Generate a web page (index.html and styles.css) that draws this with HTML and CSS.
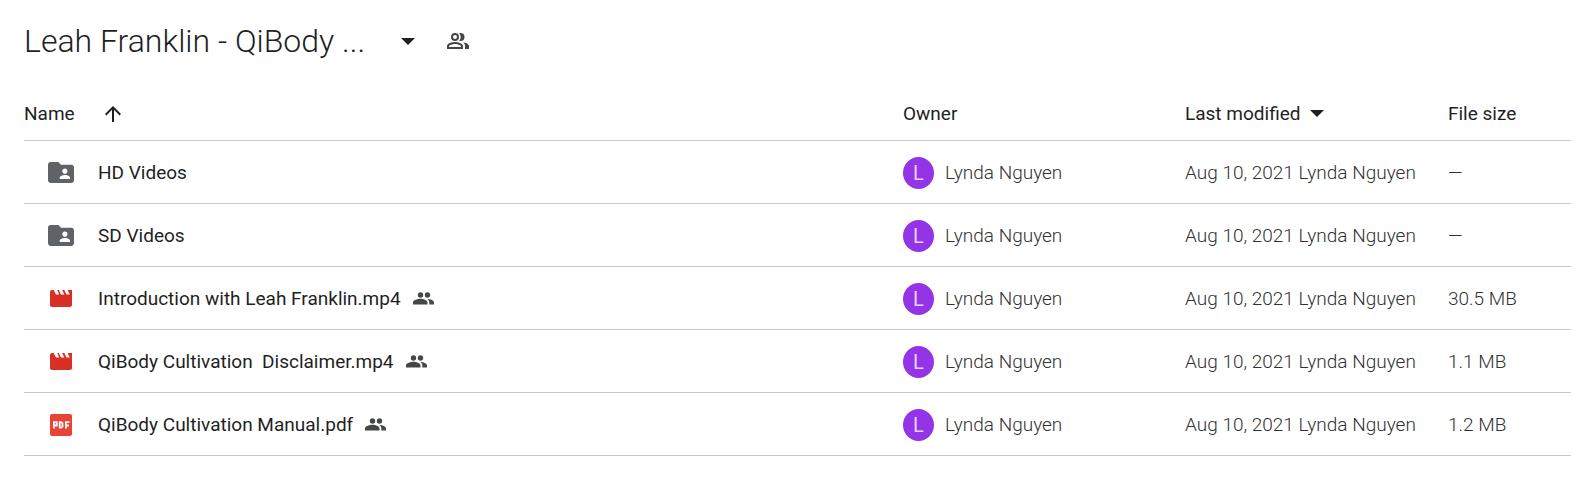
FILE: index.html
```html
<!DOCTYPE html>
<html lang="en">
<head>
<meta charset="utf-8">
<title>Leah Franklin - QiBody ...</title>
<link rel="stylesheet" href="styles.css">
</head>
<body>
<svg class="sprite" aria-hidden="true">
  <symbol id="caret" viewBox="0 0 14 7"><path d="M0 0h14L7 7z"/></symbol>
  <symbol id="arrow-up" viewBox="0 0 16 16"><path d="M7 16V3.8L1.4 9.4 0 8l8-8 8 8-1.4 1.4L9 3.8V16z"/></symbol>
  <symbol id="people-outline" viewBox="1 4 22 16"><path fill-rule="evenodd" d="M9 4a4 4 0 1 0 0 8 4 4 0 0 0 0-8zm0 2a2 2 0 1 1 0 4 2 2 0 0 1 0-4zM9 13c-2.700 0-8 1.300-8 4v3h16v-3c0-2.700-5.300-4-8-4zm6 5H3v-1c.2-.7 3.300-2 6-2s5.800 1.300 6 2z"/><path d="M14.500 12a4 4 0 0 0 0-8c-.5 0-.9.100-1.300.240a5.980 5.980 0 0 1 0 7.520c.4.140.8.240 1.300.240zM17 13.200C18.200 14.100 19 15.300 19 17v3h4v-3c0-2.100-3.300-3.300-6-3.800z"/></symbol>
  <symbol id="people" viewBox="0 0 21 13"><circle cx="7.500" cy="3" r="2.700"/><circle cx="14.500" cy="3" r="2.700"/><path d="M7.500 6.800C5 6.800 0 7.900 0 10.500V12.500h14.500v-2c0-2.600-4.500-3.700-7-3.700zM14.300 6.900c1.300.8 2 2 2 3.600v2H21v-2c0-2.300-3.600-3.400-6.700-3.600z"/></symbol>
  <symbol id="folder" viewBox="2 4 20 16"><path fill-rule="evenodd" d="M20 6h-8l-2-2H4c-1.100 0-2 .9-2 2v12c0 1.100.9 2 2 2h16c1.100 0 2-.9 2-2V8c0-1.100-.9-2-2-2zm-5 3c1.100 0 2 .9 2 2s-.9 2-2 2-2-.9-2-2 .9-2 2-2zm4 8h-8v-1c0-1.330 2.670-2 4-2s4 .670 4 2v1z"/></symbol>
  <symbol id="video" viewBox="0 0 22 17"><path d="M17.600 0l2.200 4.400h-3.300L14.300 0h-2.200l2.200 4.400H11L8.800 0H7.200l2 4.400H6L3.700 0H2C.9 0 0 .9 0 2v13c0 1.100.9 2 2 2h18c1.100 0 2-.9 2-2V0z"/></symbol>
  <symbol id="pdf" viewBox="0 0 22 22"><rect width="22" height="22" rx="2"/><path fill="none" stroke="#fff" stroke-width="1.800" d="M3.900 14.500V8.200h2.800v3.300H3.900M9.700 8.200h1.500l1.300 1v3.400l-1.300 1H9.700zM15.900 14.500V8.200h3.600M15.900 11.500h3"/></symbol>
</svg>
<main class="drive">
  <header class="heading">
    <button class="folder-title" type="button">
      <h1 class="folder-name">Leah Franklin - QiBody ...</h1>
      <svg class="caret" aria-hidden="true"><use href="#caret"/></svg>
    </button>
    <button class="share" type="button" aria-label="Manage access"><svg class="share-icon" aria-hidden="true"><use href="#people-outline"/></svg></button>
  </header>
  <table class="files">
    <colgroup><col><col class="col-owner"><col class="col-modified"><col class="col-size"></colgroup>
    <thead>
      <tr>
        <th scope="col"><button class="sort name-sort" type="button">Name <svg class="arrow" aria-hidden="true"><use href="#arrow-up"/></svg></button></th>
        <th scope="col">Owner</th>
        <th scope="col"><button class="sort" type="button">Last modified <svg class="caret" aria-hidden="true"><use href="#caret"/></svg></button></th>
        <th scope="col">File size</th>
      </tr>
    </thead>
    <tbody>
      <tr>
        <td><div class="file"><span class="type"><svg class="folder" aria-hidden="true"><use href="#folder"/></svg></span><span class="file-name">HD Videos</span></div></td>
        <td><div class="owner"><span class="avatar">L</span>Lynda Nguyen</div></td>
        <td>Aug 10, 2021 Lynda Nguyen</td>
        <td>—</td>
      </tr>
      <tr>
        <td><div class="file"><span class="type"><svg class="folder" aria-hidden="true"><use href="#folder"/></svg></span><span class="file-name">SD Videos</span></div></td>
        <td><div class="owner"><span class="avatar">L</span>Lynda Nguyen</div></td>
        <td>Aug 10, 2021 Lynda Nguyen</td>
        <td>—</td>
      </tr>
      <tr>
        <td><div class="file"><span class="type"><svg class="video" aria-hidden="true"><use href="#video"/></svg></span><span class="file-name">Introduction with Leah Franklin.mp4</span><svg class="shared" aria-hidden="true"><use href="#people"/></svg></div></td>
        <td><div class="owner"><span class="avatar">L</span>Lynda Nguyen</div></td>
        <td>Aug 10, 2021 Lynda Nguyen</td>
        <td>30.5 MB</td>
      </tr>
      <tr>
        <td><div class="file"><span class="type"><svg class="video" aria-hidden="true"><use href="#video"/></svg></span><span class="file-name">QiBody Cultivation  Disclaimer.mp4</span><svg class="shared" aria-hidden="true"><use href="#people"/></svg></div></td>
        <td><div class="owner"><span class="avatar">L</span>Lynda Nguyen</div></td>
        <td>Aug 10, 2021 Lynda Nguyen</td>
        <td>1.1 MB</td>
      </tr>
      <tr>
        <td><div class="file"><span class="type"><svg class="pdf" aria-hidden="true"><use href="#pdf"/></svg></span><span class="file-name">QiBody Cultivation Manual.pdf</span><svg class="shared" aria-hidden="true"><use href="#people"/></svg></div></td>
        <td><div class="owner"><span class="avatar">L</span>Lynda Nguyen</div></td>
        <td>Aug 10, 2021 Lynda Nguyen</td>
        <td>1.2 MB</td>
      </tr>
    </tbody>
  </table>
</main>
</body>
</html>
```
FILE: styles.css
```css
* { box-sizing: border-box; }
body {
  margin: 0;
  background: #fff;
  color: #1f1f1f;
  font-family: Roboto, "Liberation Sans", sans-serif;
  font-size: 19px;
  line-height: 24px;
}
button {
  padding: 0;
  border: 0;
  background: none;
  color: inherit;
  font: inherit;
  cursor: pointer;
}
svg { display: block; flex: none; fill: currentColor; }
.sprite { position: absolute; width: 0; height: 0; }
.drive { padding: 20px 0 0 24px; }
.heading { display: flex; align-items: center; gap: 32px; }
.folder-title { display: flex; align-items: center; gap: 36px; }
.folder-name {
  margin: 0;
  font-size: 32px;
  font-weight: 300;
  line-height: 42px;
}
.caret { width: 14px; height: 7px; }
.share { color: #444746; }
.share-icon { width: 22px; height: 16px; }
.files {
  width: 100%;
  margin-top: 25px;
  table-layout: fixed;
  border-collapse: separate;
  border-spacing: 0;
}
.col-owner { width: 282px; }
.col-modified { width: 263px; }
.col-size { width: 123px; }
th, td {
  padding: 0;
  border-bottom: 1px solid #c7c7c7;
  text-align: left;
  vertical-align: middle;
  white-space: nowrap;
}
th { height: 54px; font-weight: 400; }
td { height: 63px; padding-top: 1px; color: #303232; font-weight: 300; }
.sort { display: flex; align-items: center; gap: 10px; }
.name-sort { gap: 30px; }
.arrow { width: 16px; height: 16px; }
.file { display: flex; align-items: center; padding-left: 24px; }
.type { display: flex; justify-content: center; width: 26px; margin-right: 24px; }
.file-name { color: #1f1f1f; font-weight: 400; white-space: pre; }
.folder { width: 26px; height: 21px; fill: #5f6368; }
.video { width: 22px; height: 17px; fill: #d93025; }
.pdf { width: 22px; height: 22px; fill: #ea4335; }
.shared { width: 21px; height: 13px; margin-left: 12px; fill: #444746; }
.owner { display: flex; align-items: center; gap: 11px; }
.avatar {
  display: flex;
  align-items: center;
  justify-content: center;
  width: 31px;
  height: 32px;
  border-radius: 50%;
  background: #9334e6;
  color: #e9d2fd;
  font-size: 20px;
  font-weight: 400;
}
```
